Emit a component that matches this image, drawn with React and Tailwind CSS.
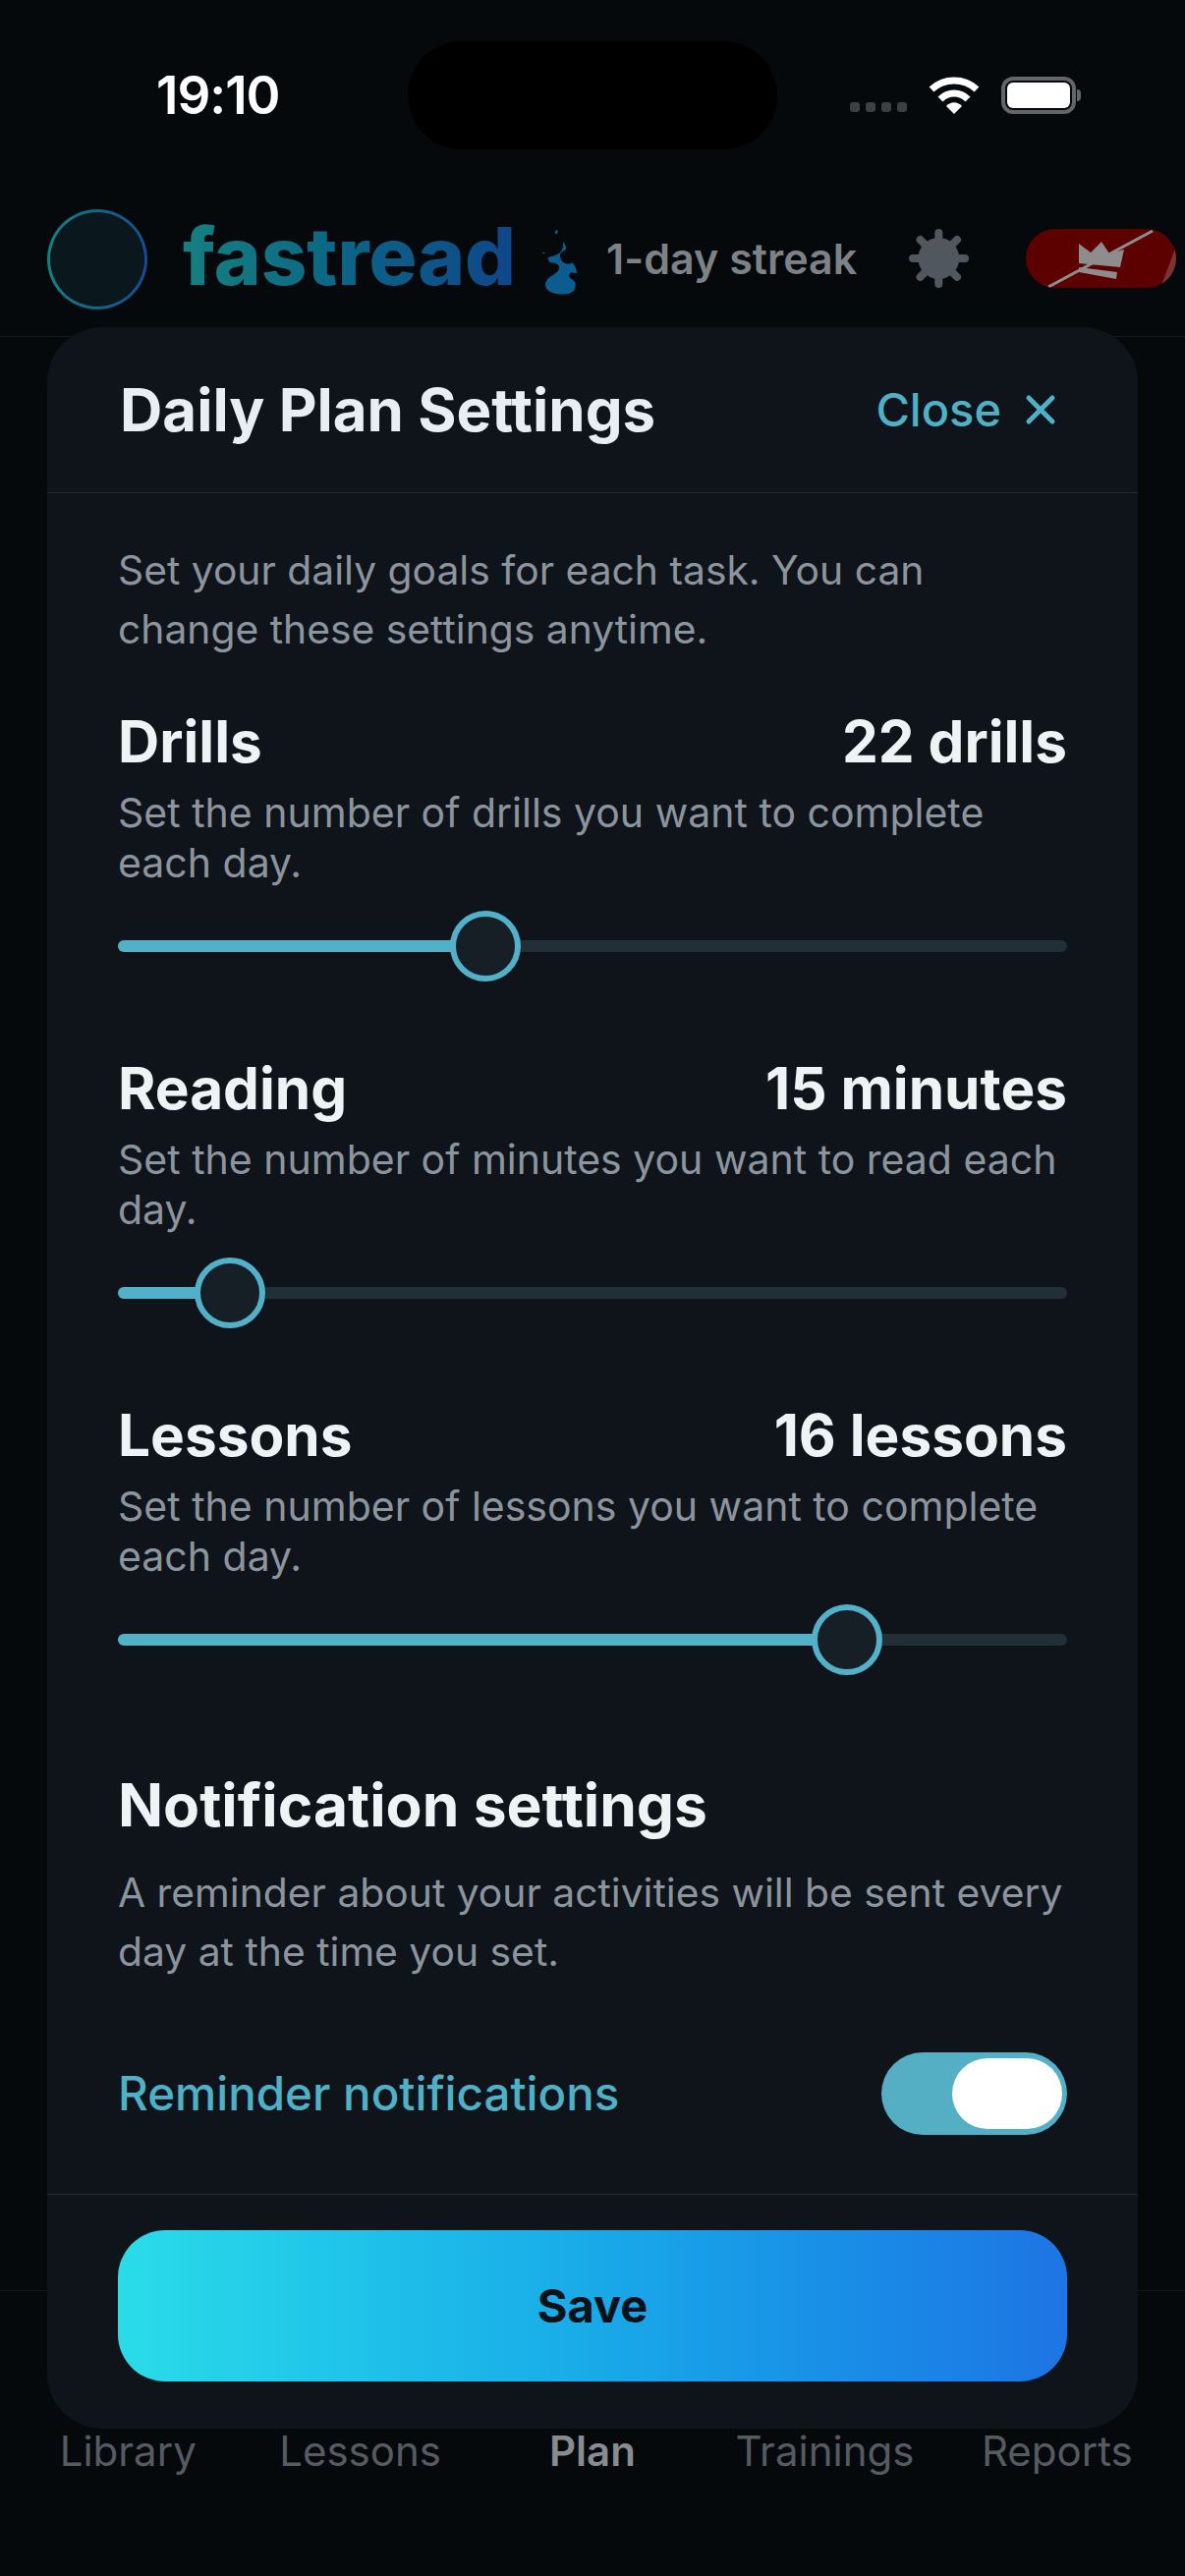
import React from "react";

const sliders = [
  { title: "Drills", value: "22 drills", text: "Set the number of drills you want to complete each day.", pos: 38.7 },
  { title: "Reading", value: "15 minutes", text: "Set the number of minutes you want to read each day.", pos: 11.8 },
  { title: "Lessons", value: "16 lessons", text: "Set the number of lessons you want to complete each day.", pos: 76.8 },
];

const tabs = ["Library", "Lessons", "Plan", "Trainings", "Reports"];

const WifiIcon = () => (
  <svg width="52" height="38" viewBox="0 0 52 38" fill="none">
    <path d="M3 13 C16 1 36 1 49 13" stroke="#fff" strokeWidth="7" />
    <path d="M12 23 C20 15 32 15 40 23" stroke="#fff" strokeWidth="7" />
    <path d="M18 30 C23 25 29 25 34 30 L26 38 Z" fill="#fff" />
  </svg>
);

const BatteryIcon = () => (
  <div className="flex items-center">
    <div className="w-[76px] h-[38px] rounded-[12px] border-[4px] border-[#636569] p-[2px]">
      <div className="w-full h-full rounded-[6px] bg-white" />
    </div>
    <div className="ml-[1px] w-[4px] h-[12px] rounded-r-full bg-[#636569]" />
  </div>
);

const FlameIcon = () => (
  <svg width="60" height="80" viewBox="0 0 60 80" fill="#0c5c90">
    <path d="M31.7 21 C34 23 35.5 26 35 29 C31 31 28 33 29.3 37 C30 41 33 43.5 37 43.5 C39 43.5 40.5 43 41.7 42.5 C44 45 46 49 46 53 C43 52.5 40 52 39 53.5 C37.5 55.5 38 57 40 58.5 C43 60 45 62 44.7 65 C44.5 69 43 72 39 73.5 C35 75 26 75 20 72.5 C16 70.5 14 68 14 65 C14 61 16 58.5 20 56 C24 54 28 51 28 47.5 C28 44 25 42.5 21 42.5 C18.5 42.5 16.7 41 16.7 37 C20 36 25 35 28 33 C31 30.5 33 26 31.7 21 Z" />
    <path d="M24 10 L27 9 L26 13 L24 13 Z" />
    <path d="M10 32 L14 32 L13 33.5 Z" />
  </svg>
);

const GearIcon = () => (
  <svg width="80" height="76" viewBox="0 0 80 76" stroke="#50575e" strokeWidth="8" strokeLinecap="round">
    <circle cx="41.3" cy="38" r="21" fill="#50575e" stroke="none" />
    <path d="M41.3 12 V64 M15 38 H68 M22.5 19 L60 57 M60 19 L22.5 57" />
  </svg>
);

const PremiumBadge = () => (
  <div className="relative w-[153px] h-[60px] rounded-full bg-[#5c0000] overflow-hidden shrink-0">
    <svg className="absolute -left-[5px] -top-[8px]" width="166" height="76" viewBox="0 0 166 76" fill="#8d8d8d">
      <path d="M157 28 L170 28 L170 76 L139 76 Z" fill="#7a3434" />
      <path d="M59 23 L71 32 L82 21 L90 33 L105 29 L101 47 L59 43 Z" />
      <path d="M59 47 L98 52 L97 59 L59 52 Z" />
      <path d="M28 67 L134 10" stroke="#8d8d8d" strokeWidth="3" />
    </svg>
  </div>
);

const PlanSlider = ({ title, value, text, pos }) => (
  <div className="mb-[104px]">
    <div className="flex items-center justify-between text-[58.5px] leading-[70px] font-bold text-[#f0f3f5]">
      <span>{title}</span>
      <span>{value}</span>
    </div>
    <p className="mt-[12px] text-[41px] leading-[51px] text-[#8c959e]">{text}</p>
    <div className="relative mt-[53px] h-[12px] rounded-full bg-[#232f37]">
      <div className="h-full rounded-full bg-[#52b1c8]" style={{ width: `${pos}%` }} />
      <div
        className="absolute top-1/2 w-[72px] h-[72px] -translate-x-1/2 -translate-y-1/2 rounded-full border-[6px] border-[#52b1c8] bg-[#161e26]"
        style={{ left: `${pos}%` }}
      />
    </div>
  </div>
);

const App = () => {
  return (
    <div className="relative w-[1206px] h-[2622px] overflow-hidden bg-[#05090c] flex flex-col font-['Inter',sans-serif]">
      {/* Status bar */}
      <div className="relative h-[196px] shrink-0">
        <div className="flex items-center justify-between pt-[42px]">
          <span className="ml-[159px] text-[53px] leading-[110px] font-semibold text-white tracking-[-1px]">19:10</span>
          <div className="w-[376px] h-[110px] rounded-[55px] bg-black absolute left-[415px] top-[42px]" />
          <div className="flex items-center mr-[106px]">
            <div className="flex gap-[6px] mt-[24px] mr-[22px]">
              <div className="w-[10px] h-[10px] rounded-[3px] bg-[#3d4043]" />
              <div className="w-[10px] h-[10px] rounded-[3px] bg-[#3d4043]" />
              <div className="w-[10px] h-[10px] rounded-[3px] bg-[#3d4043]" />
              <div className="w-[10px] h-[10px] rounded-[3px] bg-[#3d4043]" />
            </div>
            <WifiIcon />
            <div className="ml-[22px]">
              <BatteryIcon />
            </div>
          </div>
        </div>
      </div>

      {/* App header */}
      <div className="h-[147px] shrink-0 border-b border-[#15191c] flex items-start pl-[48px]">
        <div className="w-[102px] h-[102px] mt-[17px] rounded-full p-[3px] bg-linear-to-r from-[#14807f] to-[#184b90]">
          <div className="w-full h-full rounded-full bg-[#0a171d]" />
        </div>
        <span className="ml-[36px] mt-[17px] text-[81.5px] leading-[95px] font-extrabold bg-linear-to-r from-[#16807f] to-[#10458a] bg-clip-text text-transparent">
          fastread
        </span>
        <div className="ml-[16px] mt-[29px]">
          <FlameIcon />
        </div>
        <span className="ml-[16px] mt-[41px] text-[43px] leading-[52px] font-semibold text-[#7d8287]">1-day streak</span>
        <div className="ml-[42px] mt-[29px]">
          <GearIcon />
        </div>
        <div className="ml-[50px] mt-[37px]">
          <PremiumBadge />
        </div>
      </div>

      <div className="flex-1" />

      {/* Tab bar, mostly behind the sheet */}
      <div className="h-[291px] shrink-0 border-t border-[#15191c] pt-[133px] px-[12px] grid grid-cols-5 text-center text-[42px] leading-[60px] text-[#555b61]">
        {tabs.map((tab) => (
          <span key={tab} className={tab === "Plan" ? "font-semibold text-[#888c90]" : ""}>
            {tab}
          </span>
        ))}
      </div>

      {/* Settings sheet */}
      <div className="absolute left-[48px] top-[333px] w-[1110px] h-[2139px] rounded-[56px] bg-[#0f141b] flex flex-col">
        <div className="h-[169px] shrink-0 border-b border-[#232a31] flex items-center justify-between pl-[74px] pr-[83px]">
          <h2 className="text-[60px] font-bold text-[#e9eef2]">Daily Plan Settings</h2>
          <div className="flex items-center gap-[24px] text-[47px] font-medium text-[#4fb0c6]">
            <span>Close</span>
            <svg width="32" height="32" viewBox="0 0 32 32" stroke="#4fb0c6" strokeWidth="5" strokeLinecap="round">
              <path d="M4 4 L28 28 M28 4 L4 28" />
            </svg>
          </div>
        </div>

        <div className="flex-1 px-[72px] pt-[48px]">
          <p className="text-[40.8px] leading-[60px] text-[#8c959e] mb-[50px]">
            Set your daily goals for each task. You can change these settings anytime.
          </p>

          {sliders.map((s) => (
            <PlanSlider key={s.title} {...s} />
          ))}

          <h3 className="text-[60.5px] leading-[70px] font-bold text-[#f0f3f5] mt-[127px]">Notification settings</h3>
          <p className="mt-[24px] text-[40.8px] leading-[60px] text-[#8c959e]">
            A reminder about your activities will be sent every day at the time you set.
          </p>

          <div className="mt-[73px] flex items-center justify-between">
            <span className="text-[47.5px] font-medium text-[#4fb0c6]">Reminder notifications</span>
            <div className="w-[189px] h-[84px] rounded-full bg-linear-to-r from-[#55aec3] to-[#52b1c8] flex items-center justify-end pr-[5px]">
              <div className="w-[112px] h-[72px] rounded-full bg-white" />
            </div>
          </div>
        </div>

        <div className="h-[239px] shrink-0 border-t border-[#232a31] px-[72px] pt-[36px]">
          <button className="w-full h-[154px] rounded-[48px] bg-linear-to-r from-[#2adce8] to-[#1e74e4] text-[47px] font-bold text-[#0b1118]">
            Save
          </button>
        </div>
      </div>
    </div>
  );
};

export default App;
